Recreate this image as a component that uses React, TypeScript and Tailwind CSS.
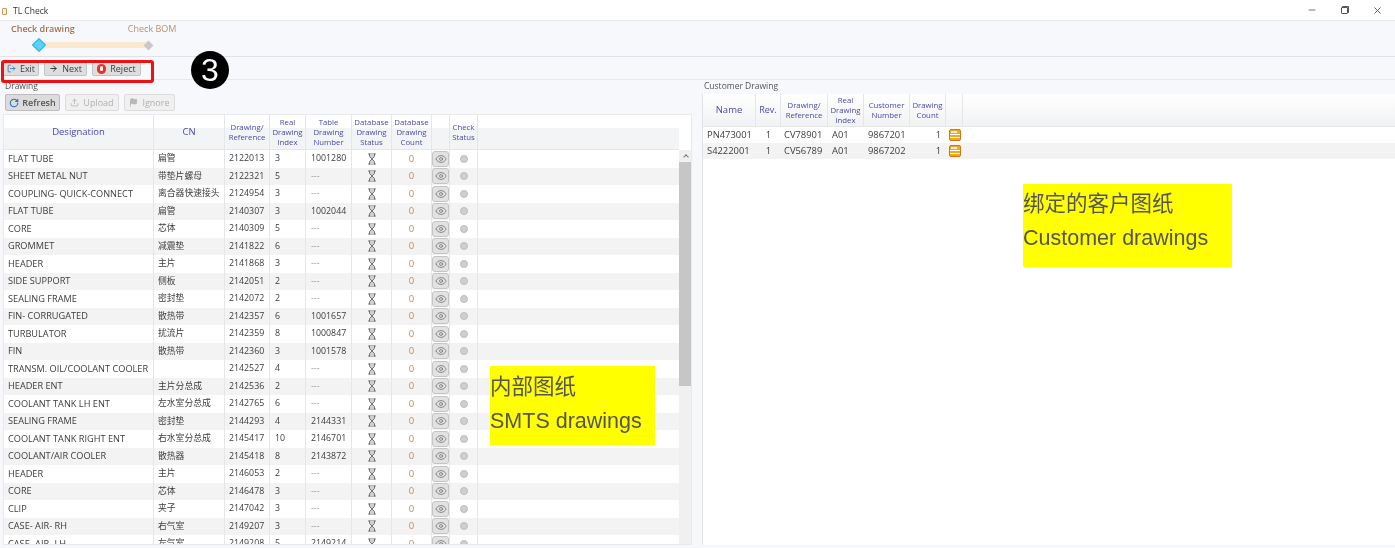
import React from 'react';
import { ArrowRight, Eye, Flag, Hourglass, LogOut, Minus, RotateCw, Upload, X } from 'lucide-react';

const rows: [string, string, string, string, string][] = [
  ['FLAT TUBE', '扁管', '2122013', '3', '1001280'],
  ['SHEET METAL NUT', '带垫片螺母', '2122321', '5', '---'],
  ['COUPLING- QUICK-CONNECT', '离合器快速接头', '2124954', '3', '---'],
  ['FLAT TUBE', '扁管', '2140307', '3', '1002044'],
  ['CORE', '芯体', '2140309', '5', '---'],
  ['GROMMET', '减震垫', '2141822', '6', '---'],
  ['HEADER', '主片', '2141868', '3', '---'],
  ['SIDE SUPPORT', '侧板', '2142051', '2', '---'],
  ['SEALING FRAME', '密封垫', '2142072', '2', '---'],
  ['FIN- CORRUGATED', '散热带', '2142357', '6', '1001657'],
  ['TURBULATOR', '扰流片', '2142359', '8', '1000847'],
  ['FIN', '散热带', '2142360', '3', '1001578'],
  ['TRANSM. OIL/COOLANT COOLER', '', '2142527', '4', '---'],
  ['HEADER ENT', '主片分总成', '2142536', '2', '---'],
  ['COOLANT TANK LH ENT', '左水室分总成', '2142765', '6', '---'],
  ['SEALING FRAME', '密封垫', '2144293', '4', '2144331'],
  ['COOLANT TANK RIGHT ENT', '右水室分总成', '2145417', '10', '2146701'],
  ['COOLANT/AIR COOLER', '散热器', '2145418', '8', '2143872'],
  ['HEADER', '主片', '2146053', '2', '---'],
  ['CORE', '芯体', '2146478', '3', '---'],
  ['CLIP', '夹子', '2147042', '3', '---'],
  ['CASE- AIR- RH', '右气室', '2149207', '3', '---'],
  ['CASE- AIR- LH', '左气室', '2149208', '5', '2149214'],
];

const customerRows = [
  ['PN473001', '1', 'CV78901', 'A01', '9867201', '1'],
  ['S4222001', '1', 'CV56789', 'A01', '9867202', '1'],
];

const headCell = 'flex shrink-0 items-center justify-center border-r border-[#e4e6e8] text-center text-[#4a4aa8]';

function ToolButton({ icon, label, width }: { icon: React.ReactNode; label: string; width: string }) {
  return (
    <div className={`flex h-[15px] items-center justify-center gap-[4px] rounded-[2px] border border-[#c4c4c4] bg-[#dedede] text-[9px] text-[#3c3c3c] ${width}`}>
      {icon}
      {label}
    </div>
  );
}

function PanelButton({ icon, label, disabled, width }: { icon: React.ReactNode; label: string; disabled?: boolean; width: string }) {
  return disabled ? (
    <div className={`flex h-[17px] items-center justify-center gap-[4px] rounded-[2px] border border-[#dcdcdc] bg-[#f0f0f0] text-[9px] text-[#b0b0b0] ${width}`}>
      {icon}
      {label}
    </div>
  ) : (
    <div className={`flex h-[17px] items-center justify-center gap-[3px] rounded-[2px] border border-[#bdbdbd] bg-[#dcdcdc] text-[9px] font-semibold text-[#555] ${width}`}>
      {icon}
      {label}
    </div>
  );
}

function LeftHeader() {
  return (
    <div className="flex h-[35px] w-[675px] shrink-0 border-b border-[#e4e6e8] bg-[linear-gradient(#fff_37%,#f3f4f5_37%)] text-[7.8px] leading-[10px]">
      <div className={`${headCell} w-[150px] text-[9.5px]`}>Designation</div>
      <div className={`${headCell} w-[71px] text-[9.5px]`}>CN</div>
      <div className={`${headCell} w-[45px]`}>Drawing/<br />Reference</div>
      <div className={`${headCell} w-[36px]`}>Real<br />Drawing<br />Index</div>
      <div className={`${headCell} w-[46px]`}>Table<br />Drawing<br />Number</div>
      <div className={`${headCell} w-[40px]`}>Database<br />Drawing<br />Status</div>
      <div className={`${headCell} w-[40px]`}>Database<br />Drawing<br />Count</div>
      <div className={`${headCell} w-[18px]`} />
      <div className={`${headCell} w-[28px]`}>Check<br />Status</div>
    </div>
  );
}

function LeftRow({ row, index }: { row: [string, string, string, string, string]; index: number }) {
  const cell = 'flex h-full shrink-0 items-center border-r border-[#e4e6e8]';
  return (
    <div className={`flex h-[17.5px] shrink-0 text-[8.8px] text-[#3c3c3c] ${index % 2 === 1 ? 'bg-[#f3f3f3]' : 'bg-white'}`}>
      <div className={`${cell} w-[150px] pl-[4px] text-[9.2px] whitespace-nowrap`}>{row[0]}</div>
      <div className={`${cell} w-[71px] pl-[4px] whitespace-nowrap`}>{row[1]}</div>
      <div className={`${cell} w-[45px] pl-[4px]`}>{row[2]}</div>
      <div className={`${cell} w-[36px] pl-[5px]`}>{row[3]}</div>
      <div className={`${cell} w-[46px] pl-[5px] ${row[4] === '---' ? 'text-[#999]' : ''}`}>{row[4]}</div>
      <div className={`${cell} w-[40px] justify-center`}>
        <Hourglass size={12} strokeWidth={1.6} fill="#cfcfcf" className="text-[#555]" />
      </div>
      <div className={`${cell} w-[40px] justify-center text-[9.5px] text-[#c08a60]`}>0</div>
      <div className={`${cell} w-[18px] justify-center`}>
        <div className="flex h-[16px] w-[17px] items-center justify-center rounded-[3px] border border-[#c4c4c4] bg-[#e2e2e2]">
          <Eye size={12} strokeWidth={1.4} className="text-[#666]" />
        </div>
      </div>
      <div className={`${cell} w-[28px] justify-center`}>
        <div className="h-[8px] w-[8px] rounded-full border border-[#bdbdbd] bg-[#cfcfcf]" />
      </div>
    </div>
  );
}

function DrawingIcon() {
  return (
    <svg width="12" height="12" viewBox="0 0 12 12">
      <rect x="0.5" y="0.5" width="11" height="11" rx="1.5" fill="#f5a623" stroke="#c9781a" />
      <rect x="2" y="2" width="6" height="2" fill="#fff3d6" />
      <rect x="1" y="5" width="10" height="1" fill="#fff" />
      <rect x="1" y="8" width="10" height="1" fill="#fff" />
    </svg>
  );
}

export default function App() {
  return (
    <div className="relative flex h-[548px] w-[1395px] flex-col overflow-hidden bg-white font-['Open_Sans','Noto_Sans_CJK_SC',sans-serif] blur-[0.3px]">
      {/* title bar */}
      <div className="flex h-[21px] shrink-0 items-center justify-between border-b border-[#e6e8ee] pl-[2px] pr-[12px]">
        <div className="flex items-center gap-[6px] pt-[3px] text-[8.5px] text-[#333]">
          <div className="h-[7px] w-[5px] rounded-[1px] border border-[#c9975a] bg-[#fdf3e2]" />
          TL Check
        </div>
        <div className="flex items-center gap-[24px] text-[#555]">
          <Minus size={10} />
          <div className="h-[7px] w-[7px] rounded-[1px] border-[1.5px] border-[#555] shadow-[1px_-1px_0_#555]" />
          <X size={11} />
        </div>
      </div>

      {/* stepper */}
      <div className="h-[36px] shrink-0 border-b border-[#dfe2e8] bg-[#f6f8fc] pl-[11px] pt-[2px]">
        <div className="flex gap-[53px] text-[9px] leading-[12px]">
          <span className="font-semibold text-[#a0724a]">Check drawing</span>
          <span className="text-[#b8926f]">Check BOM</span>
        </div>
        <div className="mt-[5px] flex items-center pl-[23px]">
          <div className="z-10 h-[10px] w-[10px] rotate-45 border border-[#1fb4ee] bg-[#5ad0fb]" />
          <div className="-mx-[2px] h-[6px] w-[105px] bg-[#fbe9cf]" />
          <div className="h-[7px] w-[7px] rotate-45 bg-[#c9c9c9]" />
        </div>
      </div>

      {/* toolbar */}
      <div className="flex h-[23px] shrink-0 items-center gap-[5px] border-b border-[#e6e8ee] bg-[#f6f8fc] pl-[3px] pt-[1px]">
        <ToolButton width="w-[36px]" icon={<LogOut size={9} className="text-[#2a6fb0]" />} label="Exit" />
        <ToolButton width="w-[43px]" icon={<ArrowRight size={9} strokeWidth={2.6} className="text-[#333]" />} label="Next" />
        <ToolButton
          width="w-[49px]"
          icon={
            <span className="flex h-[10px] w-[9px] items-center justify-center rounded-full bg-[#e2332a]">
              <span className="h-[5px] w-[3px] rounded-full bg-white" />
            </span>
          }
          label="Reject"
        />
      </div>

      <div className="flex min-h-0 flex-1 bg-[#f6f8fc] pb-[3px]">
        {/* SMTS drawings */}
        <div className="flex w-[692px] shrink-0 flex-col pl-[3px]">
          <div className="h-[11px] pl-[2px] text-[8.5px] leading-[11px] text-[#555]">Drawing</div>
          <div className="flex h-[23px] shrink-0 items-center gap-[5px] pl-[2px]">
            <PanelButton width="w-[55px]" icon={<RotateCw size={10} strokeWidth={2.6} className="text-[#2a70b8]" />} label="Refresh" />
            <PanelButton width="w-[54px]" disabled icon={<Upload size={9} />} label="Upload" />
            <PanelButton width="w-[51px]" disabled icon={<Flag size={9} fill="#b8b8b8" />} label="Ignore" />
          </div>
          <div className="flex min-h-0 flex-1 flex-col overflow-hidden border border-[#e8eaee] bg-white">
            <LeftHeader />
            <div className="flex min-h-0 flex-1">
              <div className="flex w-[675px] shrink-0 flex-col overflow-hidden">
                {rows.map((row, i) => (
                  <LeftRow key={i} row={row} index={i} />
                ))}
              </div>
              <div className="flex w-[13px] shrink-0 flex-col bg-[#f0f0f0]">
                <div className="flex h-[12px] items-center justify-center text-[#888]">
                  <div className="mt-[2px] h-[4px] w-[4px] rotate-45 border-l border-t border-[#777]" />
                </div>
                <div className="h-[224px] bg-[#c6c6c6]" />
              </div>
            </div>
          </div>
        </div>

        {/* customer drawings */}
        <div className="ml-[10px] flex min-w-0 flex-1 flex-col">
          <div className="h-[14px] pl-[2px] text-[8.5px] leading-[11px] text-[#555]">Customer Drawing</div>
          <div className="flex min-h-0 flex-1 flex-col border-l border-[#e0e2e6] bg-white">
            <div className="flex h-[33px] shrink-0 border-b border-[#e4e6e8] bg-[linear-gradient(#fff,#f1f2f4)] text-[7.8px] leading-[10px]">
              <div className={`${headCell} w-[53px] text-[9.5px] font-medium`}>Name</div>
              <div className={`${headCell} w-[25px] text-[9px]`}>Rev.</div>
              <div className={`${headCell} w-[47px]`}>Drawing/<br />Reference</div>
              <div className={`${headCell} w-[36px]`}>Real<br />Drawing<br />Index</div>
              <div className={`${headCell} w-[46px]`}>Customer<br />Number</div>
              <div className={`${headCell} w-[36px]`}>Drawing<br />Count</div>
              <div className={`${headCell} w-[17px]`} />
            </div>
            {customerRows.map((row, i) => (
              <div key={row[0]} className={`flex h-[16px] shrink-0 items-center text-[9.4px] text-[#3c3c3c] ${i === 1 ? 'bg-[#f3f3f3]' : ''}`}>
                <div className="w-[53px] shrink-0 pl-[4px]">{row[0]}</div>
                <div className="w-[25px] shrink-0 text-center">{row[1]}</div>
                <div className="w-[47px] shrink-0 pl-[3px]">{row[2]}</div>
                <div className="w-[36px] shrink-0 pl-[4px]">{row[3]}</div>
                <div className="w-[46px] shrink-0 pl-[4px]">{row[4]}</div>
                <div className="w-[36px] shrink-0 pr-[5px] text-right">{row[5]}</div>
                <div className="flex w-[17px] shrink-0 justify-center">
                  <DrawingIcon />
                </div>
              </div>
            ))}
          </div>
        </div>
      </div>

      {/* annotations drawn over the screenshot */}
      <div className="absolute left-[1px] top-[60px] h-[23px] w-[153px] rounded-[3px] border-[3px] border-[#ee1111]" />
      <div className="absolute left-[191px] top-[51px] flex h-[38px] w-[38px] items-center justify-center rounded-full bg-black font-['Liberation_Sans',sans-serif] text-[32px] text-white">
        3
      </div>
      <div className="absolute left-[490px] top-[366px] flex h-[79px] w-[165px] flex-col gap-[6px] bg-[#ffff00] pt-[7px] font-['Liberation_Sans','Noto_Sans_CJK_SC',sans-serif] text-[21.5px] leading-[28px] text-[#555]">
        <span>内部图纸</span>
        <span>SMTS drawings</span>
      </div>
      <div className="absolute left-[1023px] top-[184px] flex h-[83px] w-[209px] flex-col gap-[6px] bg-[#ffff00] pt-[6px] font-['Liberation_Sans','Noto_Sans_CJK_SC',sans-serif] text-[21.5px] leading-[28px] text-[#555]">
        <span>绑定的客户图纸</span>
        <span>Customer drawings</span>
      </div>
    </div>
  );
}
